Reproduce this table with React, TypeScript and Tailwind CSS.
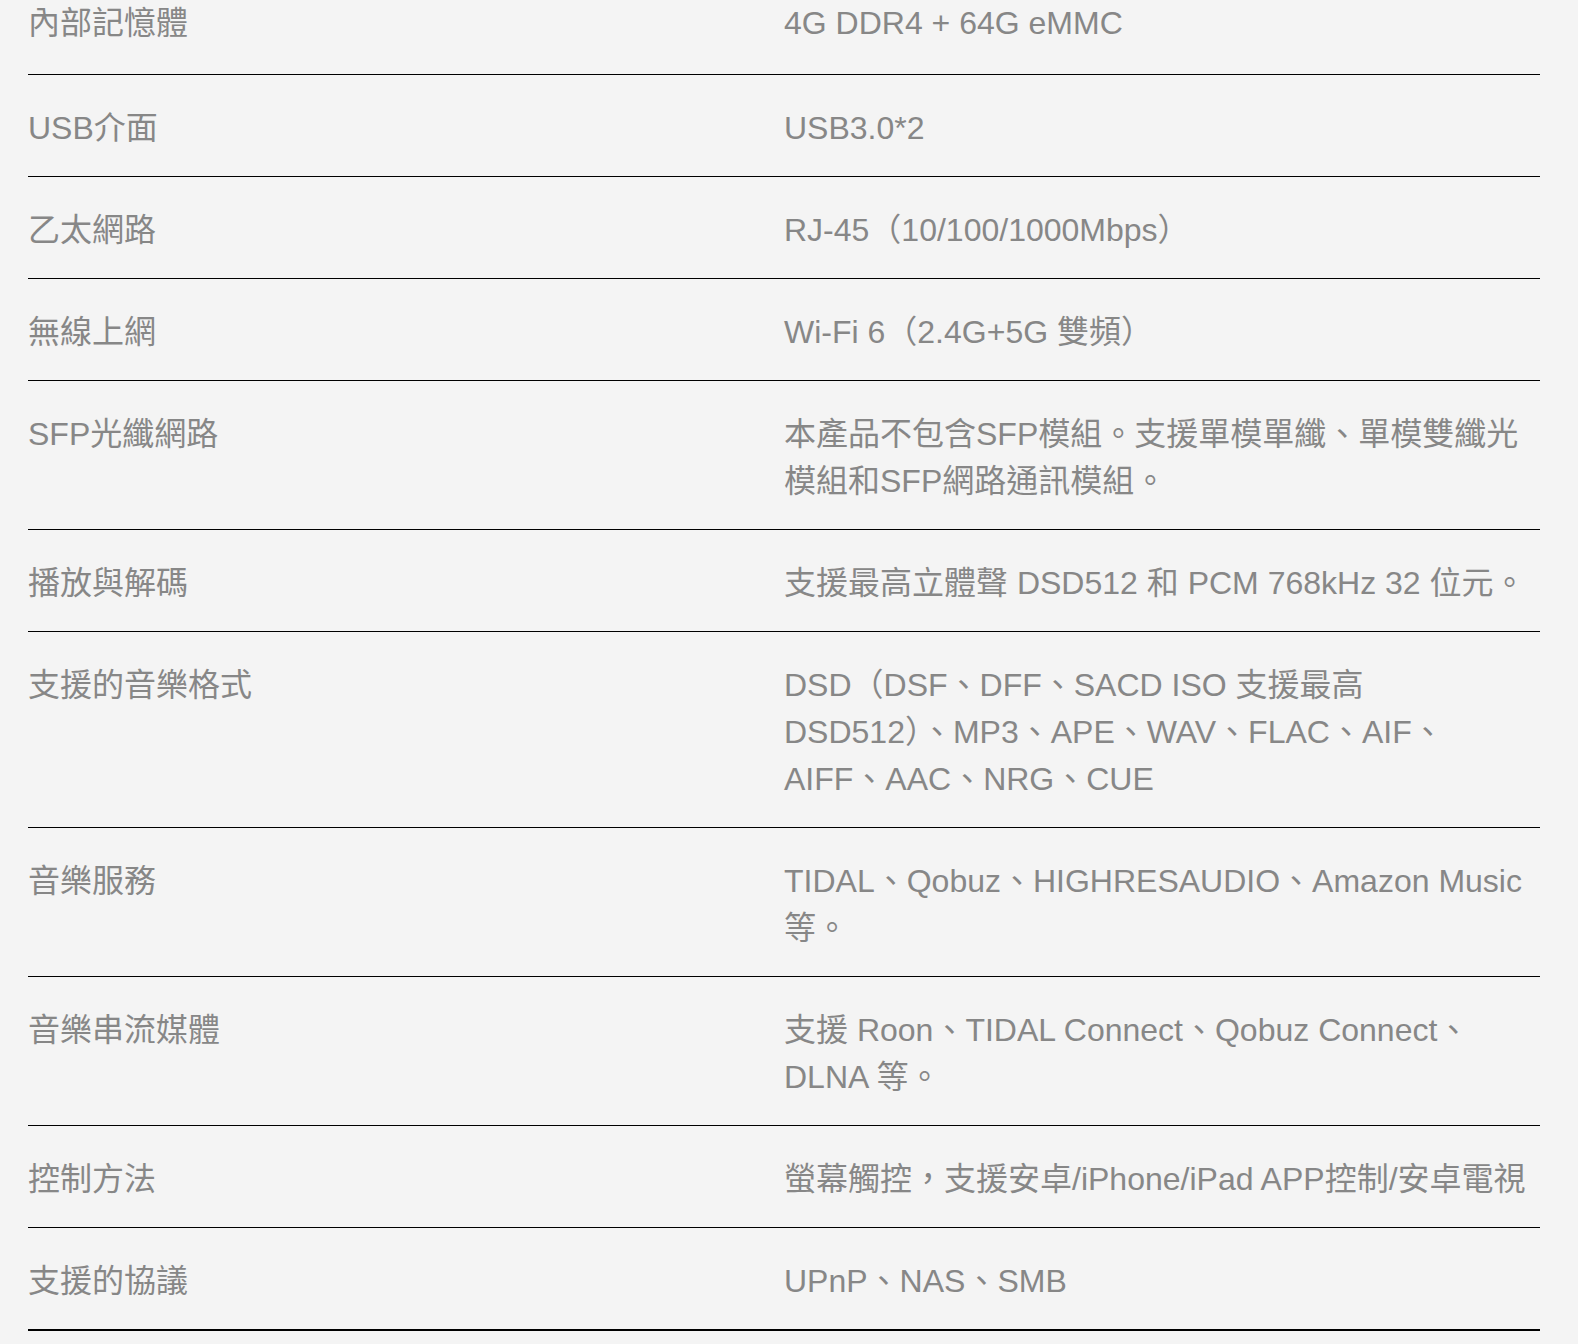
import React from "react";

const rows: [string, string][] = [
  ["內部記憶體", "4G DDR4 + 64G eMMC"],
  ["USB介面", "USB3.0*2"],
  ["乙太網路", "RJ-45（10/100/1000Mbps）"],
  ["無線上網", "Wi-Fi 6（2.4G+5G 雙頻）"],
  ["SFP光纖網路", "本產品不包含SFP模組。支援單模單纖、單模雙纖光模組和SFP網路通訊模組。"],
  ["播放與解碼", "支援最高立體聲 DSD512 和 PCM 768kHz 32 位元。"],
  ["支援的音樂格式", "DSD（DSF、DFF、SACD ISO 支援最高 DSD512）、MP3、APE、WAV、FLAC、AIF、AIFF、AAC、NRG、CUE"],
  ["音樂服務", "TIDAL、Qobuz、HIGHRESAUDIO、Amazon Music 等。"],
  ["音樂串流媒體", "支援 Roon、TIDAL Connect、Qobuz Connect、DLNA 等。"],
  ["控制方法", "螢幕觸控，支援安卓/iPhone/iPad APP控制/安卓電視"],
  ["支援的協議", "UPnP、NAS、SMB"],
];

export default function App() {
  return (
    <div
      className="min-h-[1344px] w-full bg-[#f4f4f4] overflow-hidden"
      style={{ fontFamily: '"Liberation Sans", Arial, "Noto Sans CJK TC", sans-serif' }}
    >
      <div className="ml-[28px] w-[1512px] -mt-[27px]">
        {rows.map(([label, value], i) => (
          <div
            key={i}
            className={
              "grid grid-cols-2 text-[32px] leading-[47px] text-[#878787] border-black " +
              (i === 0 ? "pt-[27px] pb-[27px] " : "pt-[30px] pb-[24px] ") +
              (i === rows.length - 1 ? "border-b-2" : "border-b")
            }
          >
            <div>{label}</div>
            <div>{value}</div>
          </div>
        ))}
      </div>
    </div>
  );
}
